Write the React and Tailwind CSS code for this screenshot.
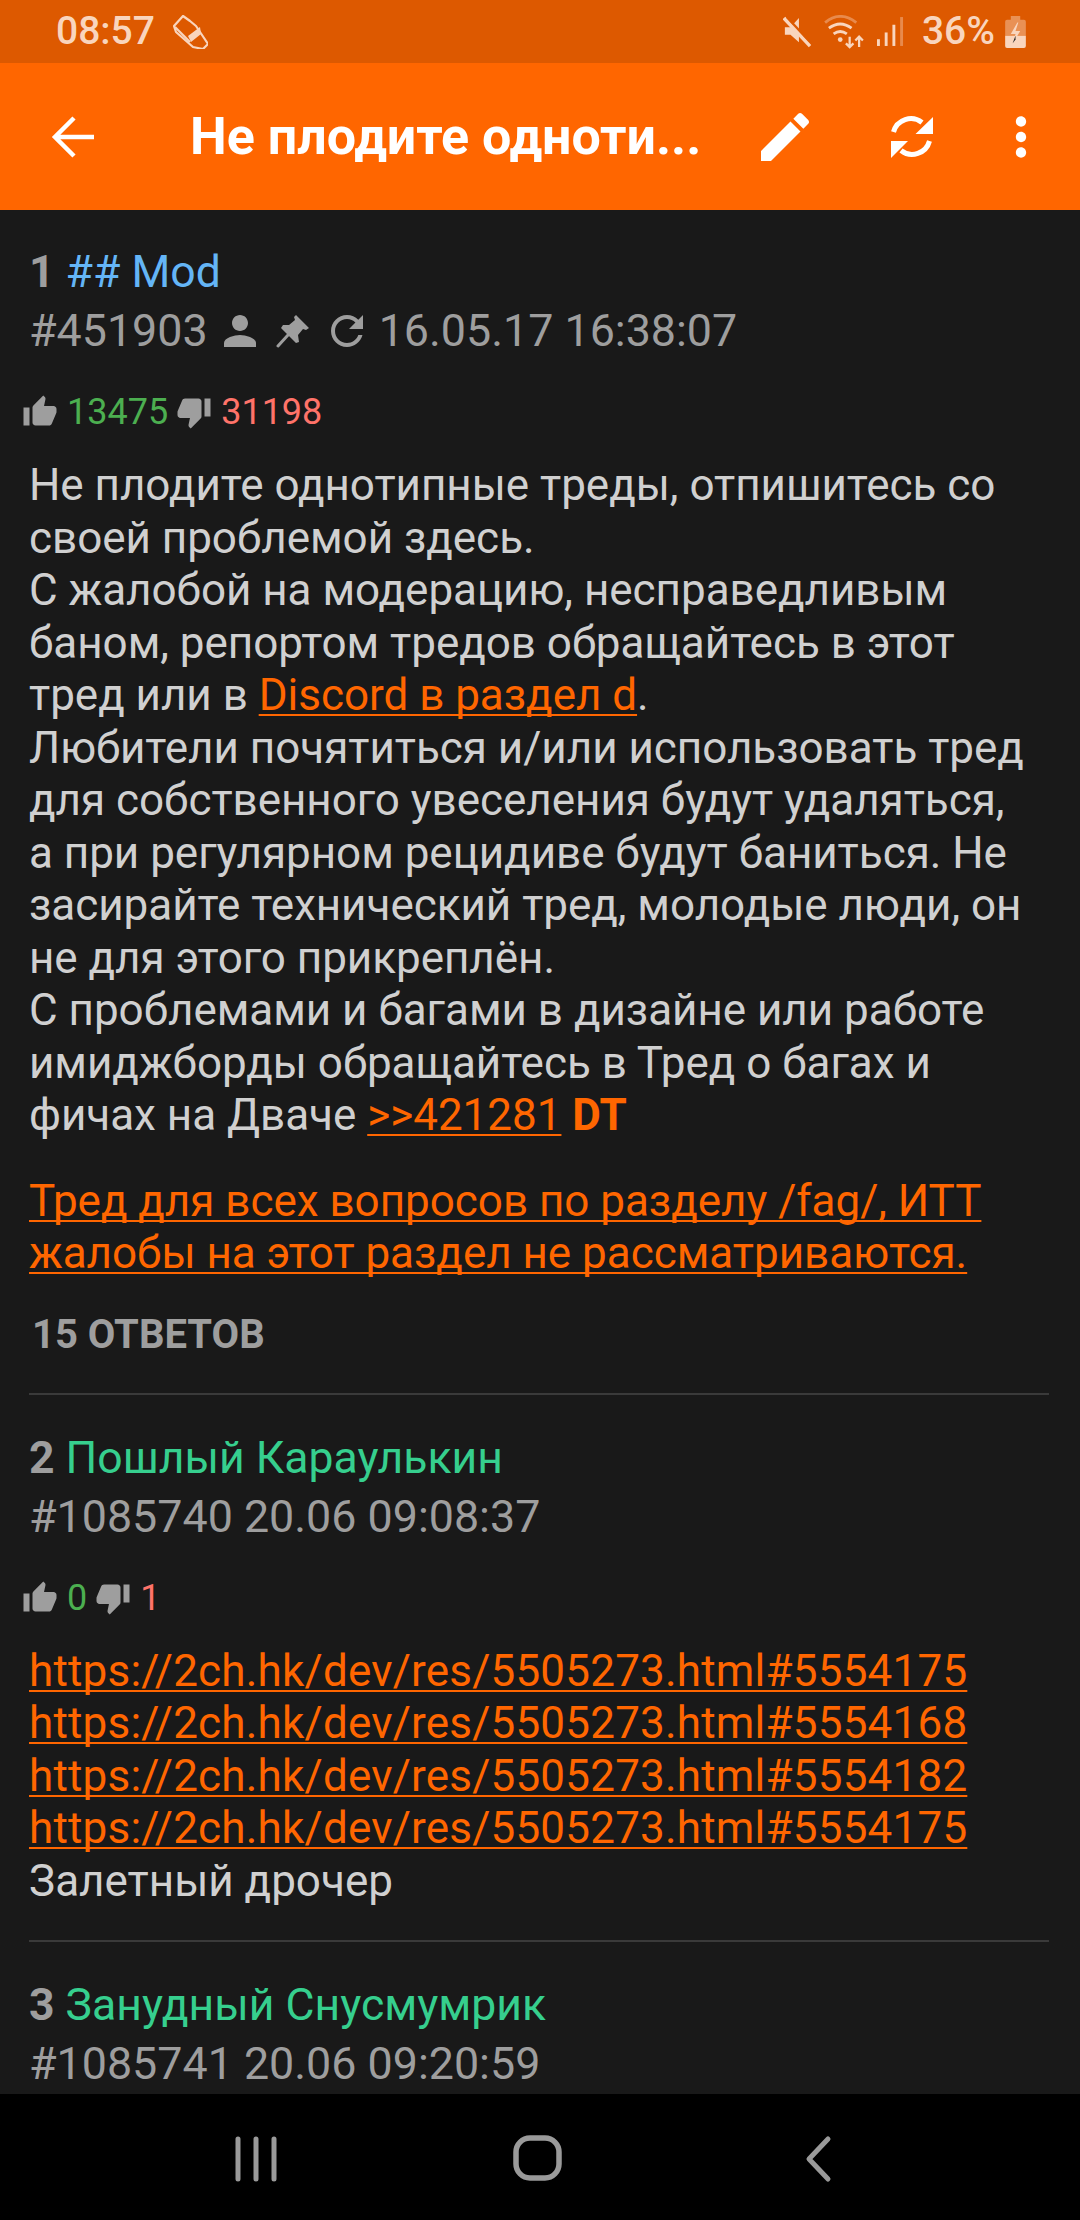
import React from "react";

const Icon = ({ d, className }) => (
  <svg viewBox="0 0 24 24" className={className} fill="currentColor">
    <path d={d} />
  </svg>
);

const paths = {
  up: "M1 21h4V9H1v12zm22-11c0-1.1-.9-2-2-2h-6.31l.95-4.57.03-.32c0-.41-.17-.79-.44-1.06L14.17 1 7.59 7.59C7.22 7.95 7 8.45 7 9v10c0 1.1.9 2 2 2h9c.83 0 1.54-.5 1.84-1.22l3.02-7.05c.09-.23.14-.47.14-.73v-2z",
  down: "M15 3H6c-.83 0-1.54.5-1.84 1.22l-3.02 7.05c-.09.23-.14.47-.14.73v2c0 1.1.9 2 2 2h6.31l-.95 4.57-.03.32c0 .41.17.79.44 1.06L9.83 23l6.59-6.59c.36-.36.58-.86.58-1.41V5c0-1.1-.9-2-2-2zm4 0v12h4V3h-4z",
  person: "M12 12c2.21 0 4-1.79 4-4s-1.79-4-4-4-4 1.79-4 4 1.79 4 4 4zm0 2c-2.67 0-8 1.34-8 4v2h16v-2c0-2.66-5.33-4-8-4z",
  redo: "M17.65 6.35C16.2 4.9 14.21 4 12 4c-4.42 0-7.99 3.58-7.99 8s3.57 8 7.99 8c3.73 0 6.84-2.55 7.73-6h-2.08c-.82 2.33-3.04 4-5.65 4-3.31 0-6-2.69-6-6s2.69-6 6-6c1.66 0 3.14.69 4.22 1.78L13 11h7V4l-2.35 2.35z",
  edit: "M3 17.25V21h3.75L17.81 9.94l-3.75-3.75L3 17.25zM20.71 7.04c.39-.39.39-1.02 0-1.41l-2.34-2.34c-.39-.39-1.02-.39-1.41 0l-1.83 1.83 3.75 3.75 1.83-1.83z",
  more: "M12 8c1.1 0 2-.9 2-2s-.9-2-2-2-2 .9-2 2 .9 2 2 2zm0 2c-1.1 0-2 .9-2 2s.9 2 2 2 2-.9 2-2-.9-2-2-2zm0 6c-1.1 0-2 .9-2 2s.9 2 2 2 2-.9 2-2-.9-2-2-2z",
};

const PinIcon = () => (
  <svg viewBox="0 0 34 34" className="w-[34px] h-[34px] ml-[12px]" fill="currentColor">
    <path d="M20 1l13 13-3 2-3-1-5 6 1 7-3 1L5 14l2-3h6l6-5-1-3z" />
    <path d="M12 21L2 32" stroke="currentColor" strokeWidth="3" strokeLinecap="round" />
  </svg>
);

const SyncIcon = () => (
  <svg viewBox="0 0 43 43" className="w-[43px] h-[43px] ml-[73px]">
    <path d="M3.5 17A18 18 0 0 1 32 7.5M39.5 26A18 18 0 0 1 11 35.5" fill="none" stroke="currentColor" strokeWidth="5" />
    <path d="M43 2v17H25.500zM1 43V26h17z" fill="currentColor" />
  </svg>
);

const StatusBar = () => (
  <div className="h-[63px] flex-none bg-[#dd5900] flex items-center pl-[56px] pr-[54px] text-[#f9d5bd]">
    <span className="text-[39px] font-medium leading-none">08:57</span>
    <svg viewBox="0 0 35 34" className="w-[35px] h-[34px] ml-[18px]" fill="none" stroke="currentColor" strokeWidth="2.2" strokeLinejoin="round">
      <path d="M1 11L10 1l7 5 6 5 4 6 8 12-5 5-10-2L3 17z" />
      <path d="M2 12l15 15" />
      <path d="M15 21L27 12l1 7-10 8z" fill="currentColor" stroke="none" />
    </svg>
    <div className="flex-1" />
    <svg viewBox="0 0 32 34" className="w-[30px] h-[32px]" fill="currentColor">
      <path d="M2 12h6l9-10v26l-9-8H2z" />
      <path d="M1 2l28 30" stroke="#f9d5bd" strokeWidth="4" />
      <path d="M4 1l28 30" stroke="#dd5900" strokeWidth="2.5" />
    </svg>
    <svg viewBox="0 0 44 36" className="w-[42px] h-[34px] ml-[10px]" fill="none" stroke="currentColor" strokeWidth="3">
      <path d="M2 8q16-13 33 0" opacity=".4" />
      <path d="M6 14q12-9 24 0M11 20q7-5 14 0" />
      <circle cx="18" cy="26" r="2.5" fill="currentColor" stroke="none" />
      <path d="M28 34v-11M24 30l4 4 4-4M38 34v-11M34 27l4-4 4 4" strokeWidth="2.4" />
    </svg>
    <svg viewBox="0 0 28 32" className="w-[27px] h-[31px] ml-[12px]" fill="currentColor">
      <rect x="0" y="24" width="3" height="7" />
      <rect x="8" y="17" width="3" height="14" />
      <rect x="16" y="9" width="3" height="22" />
      <rect x="24" y="1" width="3" height="30" opacity=".4" />
    </svg>
    <span className="text-[39px] font-medium leading-none ml-[18px]">36%</span>
    <svg viewBox="0 0 22 34" className="w-[21px] h-[32px] ml-[10px]">
      <path d="M6 0h10v4h4a2 2 0 0 1 2 2v15H0V6a2 2 0 0 1 2-2h4z" fill="#f9d5bd" opacity=".45" />
      <path d="M0 21h22v11a2 2 0 0 1-2 2H2a2 2 0 0 1-2-2z" fill="#f9d5bd" />
      <path d="M13 7L6 19h5l-3 10 8-13h-5l3-9z" fill="#f9d5bd" />
      <path d="M11 21l-3 8 3-4z" fill="#222" />
    </svg>
  </div>
);

const Toolbar = () => (
  <div className="h-[147px] flex-none bg-[#ff6600] flex items-center text-white">
    <svg viewBox="0 0 44 44" className="w-[44px] h-[44px] ml-[51px]" fill="none" stroke="currentColor" strokeWidth="4.5">
      <path d="M43 22H4M23 3L4 22l19 19" />
    </svg>
    <span className="ml-[95px] w-[514px] text-[52px] font-bold leading-none whitespace-nowrap">Не плодите одноти...</span>
    <Icon d={paths.edit} className="w-[64px] h-[64px] ml-[49px]" />
    <SyncIcon />
    <Icon d={paths.more} className="w-[62px] h-[62px] ml-[57px]" />
  </div>
);

const Rating = ({ up, down }) => (
  <div className="flex items-center h-[40px] mt-[35px] -ml-[7px] text-[36px] leading-none">
    <Icon d={paths.up} className="w-[36px] h-[36px] text-[#9e9e9e]" />
    <span className="ml-[9px] text-[#4caf50]">{up}</span>
    <Icon d={paths.down} className="w-[36px] h-[36px] ml-[8px] text-[#9e9e9e]" />
    <span className="ml-[9px] text-[#ff7369]">{down}</span>
  </div>
);

const Head = ({ num, name, color, children }) => (
  <>
    <div className="text-[44.5px] leading-[52px] h-[52px] whitespace-nowrap">
      <span className="font-bold text-[#9e9e9e]">{num} </span>
      <span className={color}>{name}</span>
    </div>
    <div className="text-[44.8px] leading-[52px] h-[52px] mt-[7px] text-[#9e9e9e] whitespace-nowrap flex items-center">
      {children}
    </div>
  </>
);

const Link = ({ children }) => (
  <span className="text-[#ff6600] underline decoration-2 underline-offset-[4px] [text-decoration-skip-ink:none]">{children}</span>
);

const Url = ({ children }) => (
  <div className="tracking-[0.2px]"><Link>{children}</Link></div>
);

function App() {
  return (
    <div className="w-[1080px] h-[2220px] flex flex-col overflow-hidden bg-[#191919] font-['Roboto',sans-serif]">
      <StatusBar />
      <Toolbar />
      <div className="flex-1 min-h-0 overflow-hidden pl-[29px] pr-[31px] pt-[36px]">
        <Head num="1" name="## Mod" color="text-[#64b5f6]">
          <span>#451903</span>
          <Icon d={paths.person} className="w-[48px] h-[48px] ml-[8px]" />
          <PinIcon />
          <Icon d={paths.redo} className="w-[48px] h-[48px] ml-[13px]" />
          <span className="ml-[8px]">16.05.17 16:38:07</span>
        </Head>
        <Rating up="13475" down="31198" />
        <div className="mt-[27px] text-[44px] leading-[52.5px] tracking-[-0.02px] text-[#d0d0d0] whitespace-nowrap">
          <div>Не плодите однотипные треды, отпишитесь со</div>
          <div>своей проблемой здесь.</div>
          <div>С жалобой на модерацию, несправедливым</div>
          <div>баном, репортом тредов обращайтесь в этот</div>
          <div>тред или в <Link>Discord в раздел d</Link>.</div>
          <div>Любители почятиться и/или использовать тред</div>
          <div>для собственного увеселения будут удаляться,</div>
          <div>а при регулярном рецидиве будут баниться. Не</div>
          <div>засирайте технический тред, молодые люди, он</div>
          <div>не для этого прикреплён.</div>
          <div>С проблемами и багами в дизайне или работе</div>
          <div>имиджборды обращайтесь в Тред о багах и</div>
          <div>фичах на Дваче <Link>&gt;&gt;421281</Link> <b className="text-[#ff6600]">DT</b></div>
          <div className="mt-[33px]"><Link>Тред для всех вопросов по разделу /fag/, ИТТ</Link></div>
          <div><Link>жалобы на этот раздел не рассматриваются.</Link></div>
        </div>
        <div className="mt-[29px] ml-[3px] text-[40px] leading-[52px] font-bold text-[#9e9e9e]">15 ОТВЕТОВ</div>
        <div className="h-[2px] bg-[#3a3a3a] mt-[32px]" />
        <div className="pt-[37px]">
          <Head num="2" name="Пошлый Караулькин" color="text-[#36cf8e]">#1085740 20.06 09:08:37</Head>
          <Rating up="0" down="1" />
          <div className="mt-[27px] text-[44px] leading-[52.5px] text-[#d0d0d0] whitespace-nowrap">
            <Url>https://2ch.hk/dev/res/5505273.html#5554175</Url>
            <Url>https://2ch.hk/dev/res/5505273.html#5554168</Url>
            <Url>https://2ch.hk/dev/res/5505273.html#5554182</Url>
            <Url>https://2ch.hk/dev/res/5505273.html#5554175</Url>
            <div>Залетный дрочер</div>
          </div>
        </div>
        <div className="h-[2px] bg-[#3a3a3a] mt-[33px]" />
        <div className="pt-[37px]">
          <Head num="3" name="Занудный Снусмумрик" color="text-[#36cf8e]">#1085741 20.06 09:20:59</Head>
        </div>
      </div>
      <div className="h-[126px] flex-none bg-black relative text-[#9a9a9a]">
        <svg viewBox="0 0 1080 126" className="w-full h-full" fill="none" stroke="currentColor" strokeLinecap="round">
          <path d="M238 45v40M256 45v40M274 45v40" strokeWidth="5" />
          <rect x="516" y="44" width="43" height="40" rx="14" strokeWidth="5.5" />
          <path d="M828 45l-19 20 19 20" strokeWidth="5" strokeLinejoin="round" />
        </svg>
      </div>
    </div>
  );
}

export default App;
